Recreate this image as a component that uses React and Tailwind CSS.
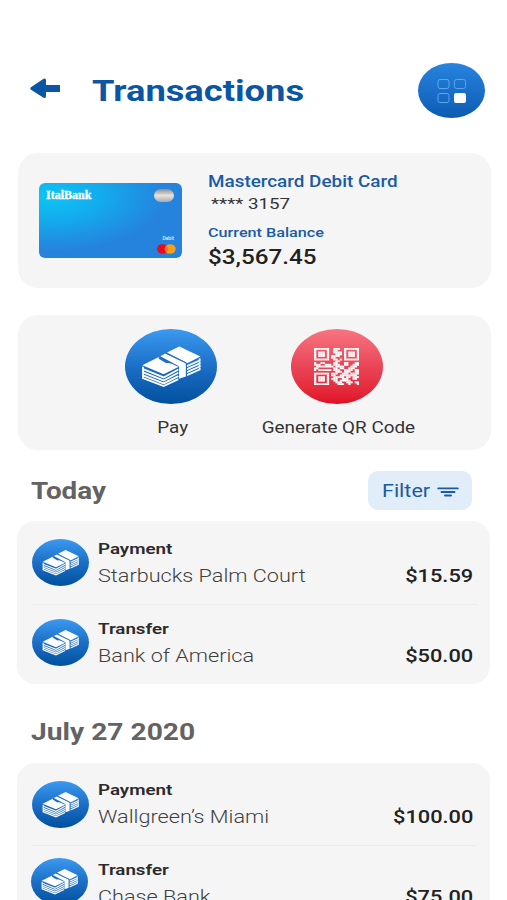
const TEXT = "block whitespace-nowrap scale-x-[1.21]";

function MoneyBadge({ className }) {
  return (
    <div className={`flex shrink-0 rounded-[50%] bg-linear-to-b from-[#3b9af0] via-[#1b6fc6] to-[#02509e] ${className}`}>
      <svg viewBox="0 0 276 226" preserveAspectRatio="none" className="h-full w-full">
        <g fill="none" stroke="#fff" strokeWidth="5.5">
          <path d="M54 114 V121 L116 146 L160 122" />
          <path d="M54 123 V131 L116 155 L160 132" />
          <path d="M54 133 V140 L116 164 L160 142" />
          <path d="M54 142 V148 L116 172 L160 151" />
          <path d="M186 112 L224 95 V89" />
          <path d="M186 121 L224 104 V98" />
          <path d="M186 130 L224 113 V107" />
          <path d="M186 139 L224 122 V116" />
        </g>
        <g fill="#fff">
          <path d="M52 109 L100 85 L161 114 L116 136 Z" />
          <path d="M126 71 L163 53 L226 83 L187 103 Z" />
        </g>
        <path d="M100 89 L110 83 L158 106 L156 112 Q140 101 124 103 Q114 98 100 89" fill="#1e70c2" />
        <path d="M106 82 L121 74 L183 104 V143 L162 150 V112 Z" fill="#fff" />
        <path d="M121 72 L184 102 V143" fill="none" stroke="#1e70c2" strokeWidth="3" />
      </svg>
    </div>
  );
}

const QR_ROWS = [
  "111111100111001111111",
  "100000100110001000001",
  "101110100111101011101",
  "101110100011101011101",
  "101110101111001011101",
  "100000101100001000001",
  "111111100110101111111",
  "000000000011000000000",
  "100110000110001100011",
  "111001110111001100111",
  "011111111011110001110",
  "110000000110110011100",
  "101111110111001111011",
  "000000000011101110011",
  "111111101110011101111",
  "100000101100111111110",
  "101110100111110110111",
  "101110101110011100110",
  "101110100110111110000",
  "100000100011100111011",
  "111111100001110010001",
];

function QrCode() {
  return (
    <svg viewBox="0 0 21 21" preserveAspectRatio="none" className="h-[37px] w-[45px]">
      {QR_ROWS.map((row, y) =>
        [...row].map((bit, x) =>
          bit === "1" ? <rect key={`${x}-${y}`} x={x} y={y} width="1.06" height="1.06" fill="#fff" /> : null
        )
      )}
    </svg>
  );
}

function Row({ type, name, amount, badge = "mt-[18px]", offset = "pt-[18px]" }) {
  return (
    <div className="flex h-full">
      <MoneyBadge className={`h-[47px] w-[57px] ${badge}`} />
      <div className={`ml-[9px] flex-1 ${offset}`}>
        <div className={`${TEXT} origin-left text-[15.5px] leading-5 font-semibold text-[#2b2b2b]`}>{type}</div>
        <div className="mt-[5px] flex justify-between leading-6">
          <span className={`${TEXT} origin-left text-[17.9px] font-light text-[#3f3f3f]`}>{name}</span>
          <span className={`${TEXT} origin-right text-[18px] font-medium text-[#222]`}>{amount}</span>
        </div>
      </div>
    </div>
  );
}

export default function App() {
  return (
    <div className="h-[900px] w-[507px] overflow-hidden bg-white font-['Roboto',sans-serif]">
      <header className="flex h-[153px] items-start pt-[63px] pl-[30px]">
        <svg viewBox="0 0 30 21" className="mt-[15px] h-[21px] w-[30px]">
          <path d="M0.6 9.6 L13.6 0.8 Q16 0 16 2.5 V7 H30 V14 H16 V18.2 Q16 20.6 13.6 19.7 L0.6 11.4 Q0 10.5 0.6 9.6Z" fill="#0b56a4" />
        </svg>
        <h1 className="ml-[31.5px] block origin-left scale-x-[1.23] text-[29.5px] leading-[56px] font-bold whitespace-nowrap text-[#0b56a4]">Transactions</h1>
        <button className="mr-[22px] ml-auto flex h-[55px] w-[67px] items-center justify-center rounded-[50%] bg-linear-to-b from-[#2784df] to-[#0d5bb3]">
          <svg viewBox="0 0 30 26" className="h-[26px] w-[30px]" fill="none" stroke="#5aa6ef">
            <rect x="1" y="1.5" width="11" height="9" rx="2" />
            <rect x="17.5" y="1.5" width="11" height="9" rx="2" />
            <rect x="1" y="15.5" width="11" height="9" rx="2" />
            <rect x="17" y="15" width="12" height="10" rx="2" fill="#fff" stroke="none" />
          </svg>
        </button>
      </header>

      <section className="ml-[18px] flex h-[135px] w-[473px] rounded-[20px] bg-[#f5f5f5]">
        <div className="mt-[30px] ml-[21px] flex h-[75px] w-[143px] justify-between rounded-[6px] bg-[radial-gradient(ellipse_at_8%_18%,#0cc5f6_0%,#14a8ec_30%,#2583de_62%)]">
          <span className="mt-[5px] ml-[7px] block origin-left font-['Liberation_Serif',serif] text-[12px] leading-[14px] font-bold text-white [-webkit-text-stroke:0.3px_white]">ItalBank</span>
          <div className="mr-[6px] flex flex-col items-end">
            <div className="mt-[6px] mr-[2px] h-[13px] w-[20px] rounded-[7px] bg-linear-to-b from-[#8f8b89] via-[#e6e4e2] to-[#aaa]" />
            <span className="mt-[33px] mr-[2px] text-[5px] leading-[7px] text-white">Debit</span>
            <svg viewBox="0 0 19 10" className="mt-[2px] h-[10px] w-[19px]">
              <ellipse cx="5.5" cy="5" rx="5.5" ry="4.8" fill="#e60b20" />
              <ellipse cx="13.2" cy="5" rx="5.5" ry="4.8" fill="#f79e1b" />
              <path d="M9.4 1.5 Q6 5 9.4 8.5 Q12.4 5 9.4 1.5" fill="#f26a1b" />
            </svg>
          </div>
        </div>
        <div className="ml-[25.5px] pt-[18px]">
          <div className={`${TEXT} origin-left text-[15.6px] leading-[22px] font-medium text-[#1a5ba6]`}>Mastercard Debit Card</div>
          <div className={`${TEXT} ml-[3px] origin-left text-[15.5px] leading-[22px] text-[#333]`}>**** 3157</div>
          <div className={`${TEXT} mt-[9px] origin-left text-[13.4px] leading-[18px] font-medium text-[#1a5ba6]`}>Current Balance</div>
          <div className={`${TEXT} mt-[2px] origin-left text-[20px] leading-[26px] font-medium text-[#222]`}>$3,567.45</div>
        </div>
      </section>

      <section className="mt-[27px] ml-[18px] flex h-[135px] w-[473px] rounded-[20px] bg-[#f5f5f5]">
        <div className="ml-[107px] flex w-[92px] flex-col items-center pt-[14px]">
          <MoneyBadge className="h-[75px] w-[92px]" />
          <span className={`${TEXT} mt-[13px] ml-[4px] text-[15.6px] leading-[22px] text-[#333]`}>Pay</span>
        </div>
        <div className="ml-[74px] flex w-[92px] flex-col items-center pt-[14px]">
          <div className="flex h-[75px] w-[92px] items-center justify-center rounded-[50%] bg-linear-to-b from-[#f87480] via-[#ea4457] to-[#e00d24] pr-[2px]">
            <QrCode />
          </div>
          <span className={`${TEXT} mt-[13px] ml-[3px] text-[15.6px] leading-[22px] text-[#333]`}>Generate QR Code</span>
        </div>
      </section>

      <div className="mt-[21px] flex h-[40px] items-start justify-between pr-[35px] pl-[31px]">
        <h2 className={`${TEXT} origin-left text-[23px] leading-[41px] font-bold text-[#636363]`}>Today</h2>
        <button className="flex h-[39px] w-[104px] items-center rounded-[10px] bg-[#e1edf9] pt-[2px] pr-[13px] pl-[14px]">
          <span className={`${TEXT} origin-left text-[17.8px] text-[#1a5ba6]`}>Filter</span>
          <svg viewBox="0 0 22 10" className="mt-px ml-auto h-[10px] w-[22px]" stroke="#1a5ba6" strokeWidth="1.9" strokeLinecap="round">
            <path d="M1.2 1.4 H20.8 M4.5 5 H17.5 M8 8.5 H14" />
          </svg>
        </button>
      </div>

      <section className="mt-[10px] ml-[17px] h-[163px] w-[473px] rounded-[18px] bg-[#f5f5f5] pr-[17px] pl-[15px]">
        <div className="h-[83px]"><Row type="Payment" name="Starbucks Palm Court" amount="$15.59" /></div>
        <div className="-mr-[4px] h-[1px] bg-[#ececec]" />
        <div className="-mt-[4px] h-[80px]"><Row type="Transfer" name="Bank of America" amount="$50.00" /></div>
      </section>

      <h2 className="mt-[34px] ml-[30.5px] block origin-left scale-x-[1.225] text-[23px] leading-[30px] font-bold whitespace-nowrap text-[#636363]">July 27 2020</h2>

      <section className="mt-[15px] ml-[17px] h-[164px] w-[473px] rounded-[18px] bg-[#f5f5f5] pr-[17px] pl-[15px]">
        <div className="h-[82px]"><Row type="Payment" name="Wallgreen’s Miami" amount="$100.00" offset="pt-[17px]" /></div>
        <div className="-mr-[4px] h-[1px] bg-[#ececec]" />
        <div className="-mt-[3px] h-[80px]"><Row type="Transfer" name="Chase Bank" amount="$75.00" badge="mt-[15px] -ml-px mr-px" offset="pt-[17px]" /></div>
      </section>
    </div>
  );
}
